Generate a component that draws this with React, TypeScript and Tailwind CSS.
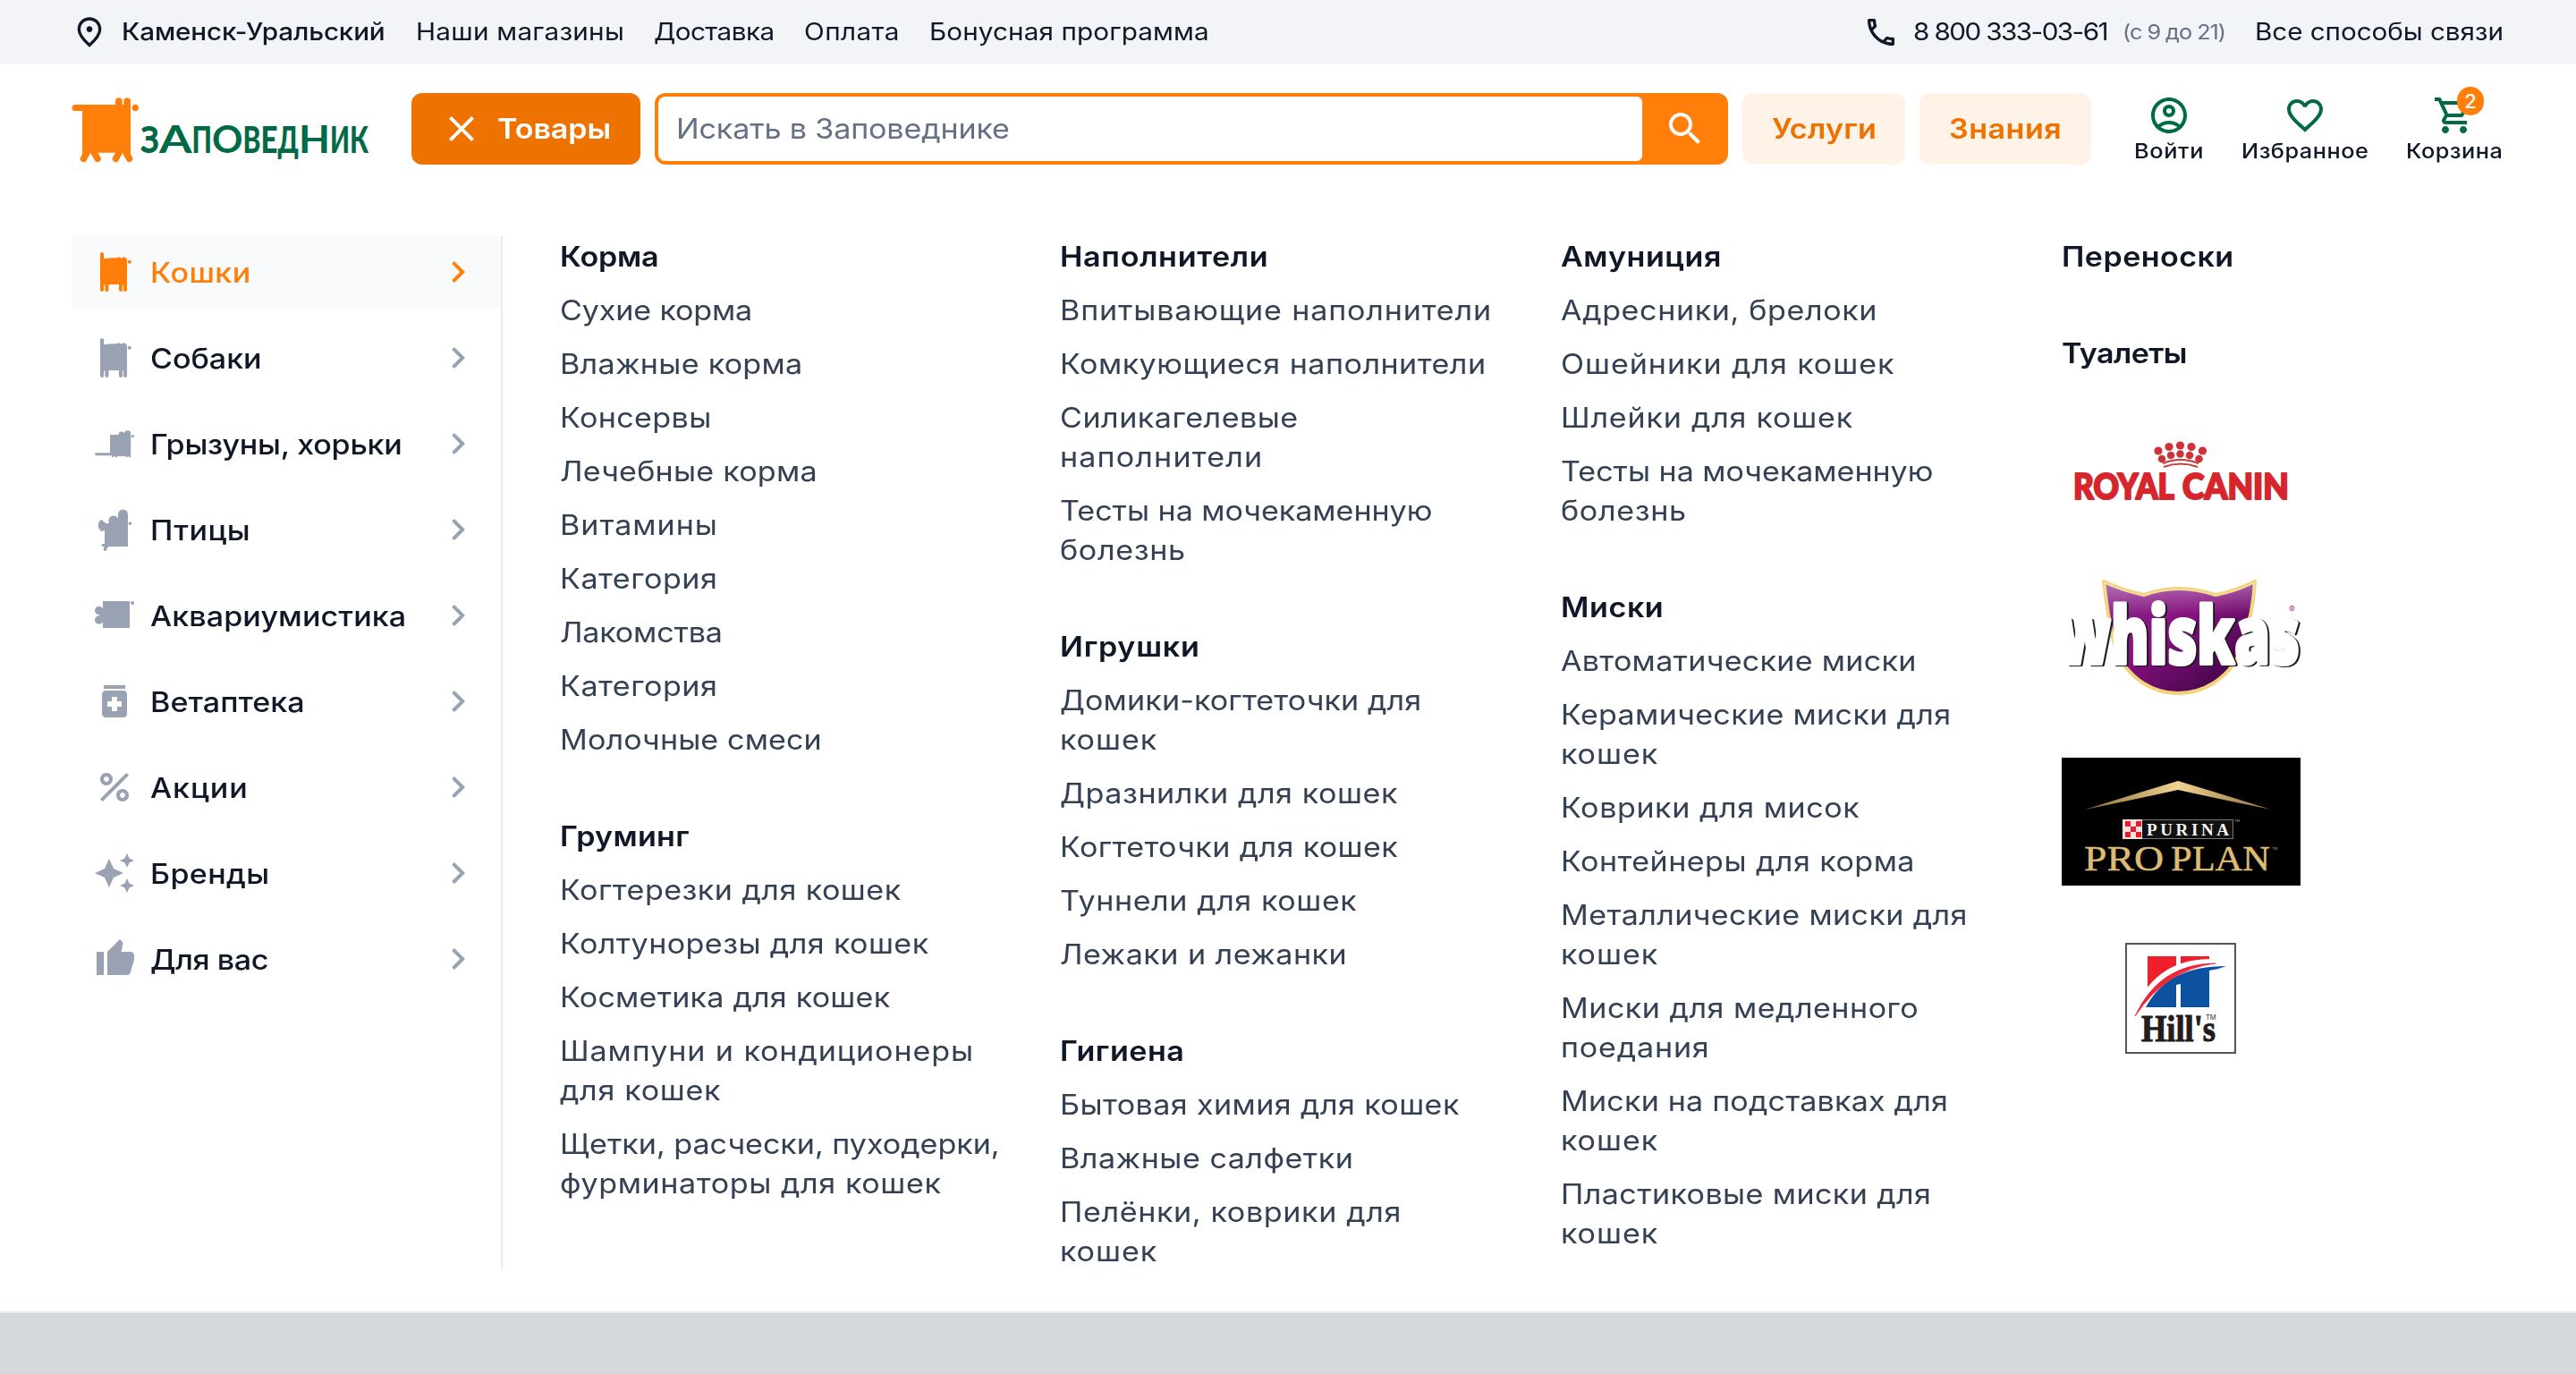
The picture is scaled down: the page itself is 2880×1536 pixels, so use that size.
import React, { useLayoutEffect, useRef } from "react";
import {
  MdAutoAwesome,
  MdChevronRight,
  MdFavoriteBorder,
  MdMedication,
  MdOutlineAccountCircle,
  MdOutlineCall,
  MdOutlineShoppingCart,
  MdPercent,
  MdSearch,
} from "react-icons/md";

const STRETCH = 1.1;

/** A single line of slightly widened text whose tracking is adjusted to fill the given width. */
function Line({ w, children, className = "" }: { w: number; children: string; className?: string }) {
  const ref = useRef<HTMLSpanElement>(null);
  useLayoutEffect(() => {
    const el = ref.current;
    if (!el) return;
    el.style.letterSpacing = "0px";
    const natural = el.offsetWidth;
    el.style.letterSpacing = `${((w + 2) / STRETCH - natural) / children.length}px`;
  }, [w, children]);
  return (
    <span className={`block whitespace-nowrap ${className}`} style={{ width: w + 2 }}>
      <span ref={ref} className="inline-block origin-left scale-x-[1.1] pt-px">
        {children}
      </span>
    </span>
  );
}

type Row = [string, number];
type Item = Row[];
type Section = { title: Row; items: Item[] };

const columns: Section[][] = [
  [
    {
      title: ["Корма", 108],
      items: [
        [["Сухие корма", 213]],
        [["Влажные корма", 270]],
        [["Консервы", 168]],
        [["Лечебные корма", 286]],
        [["Витамины", 175]],
        [["Категория", 174]],
        [["Лакомства", 180]],
        [["Категория", 174]],
        [["Молочные смеси", 291]],
      ],
    },
    {
      title: ["Груминг", 143],
      items: [
        [["Когтерезки для кошек", 380]],
        [["Колтунорезы для кошек", 410]],
        [["Косметика для кошек", 367]],
        [["Шампуни и кондиционеры", 461], ["для кошек", 178]],
        [["Щетки, расчески, пуходерки,", 490], ["фурминаторы для кошек", 424]],
      ],
    },
  ],
  [
    {
      title: ["Наполнители", 231],
      items: [
        [["Впитывающие наполнители", 481]],
        [["Комкующиеся наполнители", 475]],
        [["Силикагелевые", 265], ["наполнители", 225]],
        [["Тесты на мочекаменную", 414], ["болезнь", 139]],
      ],
    },
    {
      title: ["Игрушки", 155],
      items: [
        [["Домики-когтеточки для", 402], ["кошек", 107]],
        [["Дразнилки для кошек", 376]],
        [["Когтеточки для кошек", 376]],
        [["Туннели для кошек", 330]],
        [["Лежаки и лежанки", 319]],
      ],
    },
    {
      title: ["Гигиена", 138],
      items: [
        [["Бытовая химия для кошек", 445]],
        [["Влажные салфетки", 326]],
        [["Пелёнки, коврики для", 380], ["кошек", 107]],
      ],
    },
  ],
  [
    {
      title: ["Амуниция", 178],
      items: [
        [["Адресники, брелоки", 352]],
        [["Ошейники для кошек", 371]],
        [["Шлейки для кошек", 325]],
        [["Тесты на мочекаменную", 414], ["болезнь", 139]],
      ],
    },
    {
      title: ["Миски", 113],
      items: [
        [["Автоматические миски", 396]],
        [["Керамические миски для", 434], ["кошек", 107]],
        [["Коврики для мисок", 332]],
        [["Контейнеры для корма", 394]],
        [["Металлические миски для", 453], ["кошек", 107]],
        [["Миски для медленного", 398], ["поедания", 165]],
        [["Миски на подставках для", 431], ["кошек", 107]],
        [["Пластиковые миски для", 412], ["кошек", 107]],
      ],
    },
  ],
];

const columnWidths = ["w-[559px]", "w-[560px]", "w-[561px]"];

function PinIcon() {
  return (
    <svg className="size-10" viewBox="0 -960 960 960" fill="currentColor">
      <path d="M480-480q33 0 56.500-23.500T560-560q0-33-23.500-56.500T480-640q-33 0-56.500 23.500T400-560q0 33 23.500 56.500T480-480Zm0 294q122-112 181-203.500T720-552q0-109-69.500-178.500T480-800q-101 0-170.500 69.500T240-552q0 71 59 162.500T480-186Zm0 106Q319-217 239.500-334.500T160-552q0-150 96.500-239T480-880q127 0 223.500 89T800-552q0 100-79.500 217.500T480-80Z" />
    </svg>
  );
}

function ThumbIcon() {
  return (
    <svg className="size-12" viewBox="0 -960 960 960" fill="currentColor">
      <path d="M760-120H320v-520l280-280 50 50q7 7 11.500 19t4.500 23v14l-34 174h208q32 0 56 24t24 56v80q0 7-1.500 15t-4.500 15L834-168q-9 20-30 34t-44 14ZM240-640v520H80v-520h160Z" />
    </svg>
  );
}

function CatIcon() {
  return (
    <svg className="size-12" viewBox="0 0 48 48" fill="currentColor">
      <path d="M8 4a2 2 0 0 1 4 0v5.200Q19 8 27 8.200a2 2 0 0 1 3.500 0H33a2 2 0 0 1 3.500 0Q38 9 38 11v33a2 2 0 0 1-4 0v-5.500h-1V44a2 2 0 0 1-4 0v-6H17.500v6a2 2 0 0 1-4.200 0v-5.500H12V44a2 2 0 0 1-4 0Z" />
      <circle cx="40.800" cy="12.700" r="2" />
    </svg>
  );
}

function RodentIcon() {
  return (
    <svg className="size-12" viewBox="0 0 48 48" fill="currentColor">
      <path d="M3.500 34.200H19V14h9.500a3.400 3.400 0 0 1 6.500-1.500A3.600 3.600 0 0 1 42.200 13v25a1.200 1.200 0 0 1-2.400 0h-1a1.200 1.200 0 0 1-2.400 0H27a1.200 1.200 0 0 1-2.400 0h-1.200a1.200 1.200 0 0 1-2.400 0V37.200H3.500a1.500 1.500 0 0 1 0-3Z" />
      <circle cx="44.400" cy="15.600" r="1.700" />
    </svg>
  );
}

function BirdIcon() {
  return (
    <svg className="size-12" viewBox="0 0 48 48" fill="currentColor">
      <path d="M18 16.500a5.500 5.500 0 0 1 10-5V7a5.500 5.500 0 0 1 11 0v36H17l-2 4a1.500 1.500 0 0 1-3-1.500l.6-2.500H11a1.500 1.500 0 0 1 0-3h2V24.500l-2.500 1.300a1.600 1.600 0 0 1-2.200-2.200 1.700 1.700 0 0 1-1.900-2.600 1.700 1.700 0 0 1 .2-3 1.800 1.800 0 0 1 .8-3 1.700 1.700 0 0 1 3.200-1l4.400 3.500Z" />
      <circle cx="41.400" cy="17.200" r="1.800" />
    </svg>
  );
}

function FishIcon() {
  return (
    <svg className="size-12" viewBox="0 0 48 48" fill="currentColor">
      <path d="M11 8h30v30H11v-6L7 24l4-8Z" />
      <circle cx="6.700" cy="18.500" r="4.700" />
      <circle cx="6.700" cy="29" r="4.700" />
      <circle cx="44" cy="10" r="2" />
    </svg>
  );
}

const sidebar: { label: string; w: number; icon: React.ReactNode; active?: boolean }[] = [
  { label: "Кошки", w: 111, icon: <CatIcon />, active: true },
  { label: "Собаки", w: 122, icon: <CatIcon /> },
  { label: "Грызуны, хорьки", w: 279, icon: <RodentIcon /> },
  { label: "Птицы", w: 110, icon: <BirdIcon /> },
  { label: "Аквариумистика", w: 284, icon: <FishIcon /> },
  { label: "Ветаптека", w: 171, icon: <MdMedication className="size-12" /> },
  { label: "Акции", w: 108, icon: <MdPercent className="size-12" /> },
  { label: "Бренды", w: 132, icon: <MdAutoAwesome className="size-12" /> },
  { label: "Для вас", w: 130, icon: <ThumbIcon /> },
];

function Logo() {
  return (
    <svg className="h-20 w-[336px] shrink-0 overflow-visible" viewBox="80 104 336 80">
      <g fill="#ff7f0a">
        <path d="M84 117h45v-5a4 4 0 0 1 7.600 0v5h1.800v-5a4 4 0 0 1 7.600 0v60l2 4a3.700 3.700 0 0 1-6.500 3.500L137 171l-4.500 8.500a3.700 3.700 0 0 1-6.500-3.500l3-5.300h-19.500l3 5.300a3.700 3.700 0 0 1-6.500 3.500L101.200 171l-4.700 8.500a3.700 3.700 0 0 1-6.500-3.500l2-4v-48H84a3.500 3.500 0 0 1 0-7Z" />
        <circle cx="151.300" cy="120.500" r="3.700" />
      </g>
      <g fill="#006a47" fontFamily="Lato, sans-serif" fontWeight="900" fontSize="42.500">
        <text x="157" y="170.500" textLength="21" lengthAdjust="spacingAndGlyphs">З</text>
        <text x="178" y="170.500" textLength="36.500" lengthAdjust="spacingAndGlyphs" fontWeight="700">А</text>
        <text x="214.500" y="170.500" textLength="22.500" lengthAdjust="spacingAndGlyphs">П</text>
        <text x="237" y="170.500" textLength="34.500" lengthAdjust="spacingAndGlyphs" fontWeight="700">О</text>
        <text x="271.500" y="170.500" textLength="20" lengthAdjust="spacingAndGlyphs">В</text>
        <text x="291.500" y="170.500" textLength="19" lengthAdjust="spacingAndGlyphs">Е</text>
        <text x="310.500" y="170.500" textLength="23.500" lengthAdjust="spacingAndGlyphs">Д</text>
        <text x="334" y="170.500" textLength="35" lengthAdjust="spacingAndGlyphs" fontWeight="700">Н</text>
        <text x="369" y="170.500" textLength="22" lengthAdjust="spacingAndGlyphs">И</text>
        <text x="391" y="170.500" textLength="21" lengthAdjust="spacingAndGlyphs">К</text>
      </g>
    </svg>
  );
}

function RoyalCanin() {
  return (
    <svg className="h-[80px] w-[267px]" viewBox="0 0 267 80">
      <g fill="#cf3339">
        <circle cx="108" cy="15" r="4.600" />
        <circle cx="120" cy="10.500" r="4.600" />
        <circle cx="132.500" cy="9" r="4.600" />
        <circle cx="145" cy="10.500" r="4.600" />
        <circle cx="157.500" cy="15" r="4.600" />
        <circle cx="112" cy="24" r="4.300" />
        <circle cx="122" cy="20" r="4.300" />
        <circle cx="132.500" cy="18.500" r="4.300" />
        <circle cx="143" cy="20" r="4.300" />
        <circle cx="153.500" cy="24" r="4.300" />
      </g>
      <path d="M113 29q20-8 40 0M114 33q19-7 38 0" stroke="#c93a3c" strokeWidth="2" fill="none" />
      <g fill="#dd2229" stroke="#d02a31" strokeWidth="2.200" strokeLinejoin="round" fontFamily="Lato, sans-serif" fontWeight="900" fontSize="39">
        <text x="13" y="69" textLength="113" lengthAdjust="spacingAndGlyphs">ROYAL</text>
        <text x="135" y="69" textLength="119" lengthAdjust="spacingAndGlyphs">CANIN</text>
      </g>
    </svg>
  );
}

function Whiskas() {
  return (
    <svg className="h-[134px] w-[267px] overflow-visible" viewBox="0 0 267 134">
      <defs>
        <linearGradient id="purple" x1="0" y1="0" x2="1" y2="1">
          <stop offset="0" stopColor="#8d2b8e" />
          <stop offset="0.450" stopColor="#85107e" />
          <stop offset="1" stopColor="#2c0336" />
        </linearGradient>
        <linearGradient id="shine" x1="0" y1="0" x2="0" y2="1">
          <stop offset="0" stopColor="#fff" stopOpacity="0.350" />
          <stop offset="0.300" stopColor="#fff" stopOpacity="0" />
        </linearGradient>
      </defs>
      <path
        d="M47 5Q68 15 92 20Q130 6 172 20Q194 16 216 5Q214 40 203 72C195 108 162 130 130 130S67 108 58 72Q51 40 47 5Z"
        fill="url(#purple)" stroke="#f4d27c" strokeWidth="4" strokeLinejoin="round"
      />
      <path
        d="M47 5Q68 15 92 20Q130 6 172 20Q194 16 216 5Q214 40 203 72C195 108 162 130 130 130S67 108 58 72Q51 40 47 5Z"
        fill="url(#shine)"
      />
      <text
        className="[filter:drop-shadow(2px_1.5px_0.5px_#1c1c1f)]"
        x="-3" y="97" fill="#fff" stroke="#fff" strokeWidth="4" strokeLinejoin="round"
        fontFamily="'Open Sans', sans-serif" fontWeight="800" fontSize="88"
        textLength="269" lengthAdjust="spacingAndGlyphs"
      >
        whiskas
      </text>
      <text x="254" y="40" fontSize="10" fill="#a0408f" fontFamily="Inter, sans-serif">®</text>
    </svg>
  );
}

function ProPlan() {
  return (
    <svg className="h-[143px] w-[267px] bg-black" viewBox="0 0 267 143">
      <defs>
        <linearGradient id="gold" x1="0" y1="0" x2="1" y2="0">
          <stop offset="0" stopColor="#8a6b35" />
          <stop offset="0.500" stopColor="#f2d391" />
          <stop offset="1" stopColor="#8a6b35" />
        </linearGradient>
      </defs>
      <path d="M26 58Q80 41 130 26Q180 41 234 58Q180 47 130 36Q80 47 26 58Z" fill="url(#gold)" />
      <rect x="68.500" y="69.500" width="123" height="21" fill="#111" stroke="#777" />
      <rect x="68" y="69" width="22" height="22" fill="#f6dfe0" />
      <path d="M71 71h6v6h-6zM83 71h6v6h-6zM77 77h6v6h-6zM71 83h6v6h-6zM83 83h6v6h-6z" fill="#e01f2d" />
      <text x="95" y="86.500" fill="#f5f5f5" fontFamily="'Liberation Serif', serif" fontWeight="700" fontSize="19" textLength="92">PURINA</text>
      <g fill="#dcbb74" stroke="#dcbb74" strokeWidth="0.500" fontFamily="'Liberation Serif', serif" fontSize="40">
        <text x="25" y="125.500" textLength="89" lengthAdjust="spacingAndGlyphs">PRO</text>
        <text x="122" y="125.500" textLength="111" lengthAdjust="spacingAndGlyphs">PLAN</text>
      </g>
      <text x="235" y="103" fill="#aaa" fontFamily="Inter, sans-serif" fontSize="4">TM</text>
      <text x="193" y="72" fill="#aaa" fontFamily="Inter, sans-serif" fontSize="4">TM</text>
    </svg>
  );
}

function Hills() {
  return (
    <svg className="mr-px size-[124px]" viewBox="0 0 124 124">
      <rect x="1" y="1" width="122" height="122" fill="#fff" stroke="#555" strokeWidth="2" />
      <path d="M25 15H57V30Q37 42 25 58Z" fill="#f01f2b" />
      <path d="M62 15H94V21Q78 21 62 28Z" fill="#f01f2b" />
      <path d="M23 72Q36 48 58 37Q80 26 113 26Q103 30 94 31V72H62V46L57 47V72Z" fill="#0d52a0" />
      <path d="M11 82Q36 18 101 22" fill="none" stroke="#fff" strokeWidth="7" />
      <path d="M11 82Q38 23 101 23Q46 29 11 82Z" fill="#ee2636" stroke="#ee2636" strokeWidth="0.800" />
      <text x="18" y="110" fill="#231c1c" stroke="#231c1c" strokeWidth="1" fontFamily="'Liberation Serif', serif" fontWeight="700" fontSize="43" textLength="83" lengthAdjust="spacingAndGlyphs">Hill's</text>
      <text x="90" y="86" fill="#333" fontFamily="Inter, sans-serif" fontSize="7.500">TM</text>
    </svg>
  );
}

export default function App() {
  return (
    <div className="flex h-[1536px] w-[2880px] flex-col overflow-hidden bg-[#d5d9de] font-['Inter','Noto_Sans',sans-serif] text-[#101828]">
      <div className="border-b-2 border-[#eaecf0] bg-white">
        <div className="flex h-[72px] items-center justify-between bg-[#f2f4f7] pr-[81px] pl-20 text-[27px]">
          <div className="flex items-center">
            <PinIcon />
            <Line w={293} className="ml-4 font-[450]">Каменск-Уральский</Line>
            <nav className="ml-[34px] flex gap-[33px]">
              <Line w={231}>Наши магазины</Line>
              <Line w={133}>Доставка</Line>
              <Line w={105}>Оплата</Line>
              <Line w={311}>Бонусная программа</Line>
            </nav>
          </div>
          <div className="flex items-center">
            <MdOutlineCall className="size-10" />
            <Line w={215} className="ml-4">8 800 333-03-61</Line>
            <Line w={113} className="ml-[17px] text-[23px] text-[#667085]">(с 9 до 21)</Line>
            <Line w={276} className="ml-[33px]">Все способы связи</Line>
          </div>
        </div>

        <header className="flex h-36 items-center pl-20">
          <Logo />
          <button className="ml-11 flex h-20 w-64 items-center rounded-xl bg-[#ee7200] pl-8 text-left text-[31px] font-semibold text-white">
            <svg className="size-12" viewBox="0 0 24 24" stroke="currentColor" strokeWidth="2" fill="none">
              <path d="m5.700 5.700 12.600 12.600m0-12.600L5.700 18.300" />
            </svg>
            <Line w={125} className="ml-4">Товары</Line>
          </button>
          <div className="ml-4 flex h-20 w-[1200px] rounded-xl bg-[#ff7f0a] p-1 pr-0">
            <div className="flex h-full w-[1100px] items-center rounded-l-lg rounded-r-md bg-white pl-5 text-[31px] text-[#667085]">
              <Line w={371}>Искать в Заповеднике</Line>
            </div>
            <div className="flex flex-1 items-center justify-center text-white">
              <MdSearch className="size-12" />
            </div>
          </div>
          <button className="ml-4 flex h-20 w-[182px] items-center justify-center rounded-xl bg-[#fff2e6] text-left text-[31px] font-semibold text-[#ee7200]">
            <Line w={115}>Услуги</Line>
          </button>
          <button className="ml-4 flex h-20 w-48 items-center justify-center rounded-xl bg-[#fff2e6] text-left text-[31px] font-semibold text-[#ee7200]">
            <Line w={124}>Знания</Line>
          </button>
          <div className="ml-12 flex gap-[42px] text-[23px] leading-[30px] font-[450]">
            <div className="flex flex-col items-center">
              <MdOutlineAccountCircle className="size-12 text-[#006a47]" />
              <Line w={76}>Войти</Line>
            </div>
            <div className="flex flex-col items-center">
              <MdFavoriteBorder className="size-12 text-[#006a47]" />
              <Line w={140}>Избранное</Line>
            </div>
            <div className="relative flex flex-col items-center">
              <MdOutlineShoppingCart className="size-12 text-[#006a47]" />
              <div className="absolute -top-2 right-[21px] flex h-8 w-[30px] items-center justify-center rounded-full bg-[#ff7f0a] text-[22px] text-white">
                2
              </div>
              <Line w={106}>Корзина</Line>
            </div>
          </div>
        </header>

        <main className="flex h-[1250px] pt-12 pl-20 text-[31px] leading-[44px]">
          <aside className="flex h-[1156px] w-[482px] shrink-0 flex-col gap-4 border-r-2 border-[#eaecf0]">
            {sidebar.map((s) => (
              <a
                key={s.label}
                className={`flex h-20 items-center pr-6 pl-6 font-[450] ${s.active ? "bg-[#f9fafb] text-[#ff7f0a]" : "text-[#101828]"}`}
              >
                <span className={s.active ? "text-[#ff7f0a]" : "text-[#98a2b3]"}>{s.icon}</span>
                <Line w={s.w} className="ml-4">{s.label}</Line>
                <MdChevronRight className={`ml-auto size-12 ${s.active ? "text-[#ff7f0a]" : "text-[#98a2b3]"}`} />
              </a>
            ))}
          </aside>
          <div className="flex pl-[63px]">
            {columns.map((col, i) => (
              <div key={i} className={`flex flex-col gap-16 pl-px ${columnWidths[i]}`}>
                {col.map((sec) => (
                  <section key={sec.title[0]} className="flex flex-col gap-4">
                    <h3 className="flex h-11 font-semibold">
                      <Line w={sec.title[1]}>{sec.title[0]}</Line>
                    </h3>
                    {sec.items.map((item, j) => (
                      <a key={j} className="flex flex-col text-[#344054]">
                        {item.map(([text, w]) => (
                          <Line key={text} w={w} className="h-11">{text}</Line>
                        ))}
                      </a>
                    ))}
                  </section>
                ))}
              </div>
            ))}
            <div className="flex w-[267px] flex-col items-start">
              <h3 className="mb-16 flex h-11 font-semibold">
                <Line w={191}>Переноски</Line>
              </h3>
              <h3 className="flex h-11 font-semibold">
                <Line w={138}>Туалеты</Line>
              </h3>
              <div className="mt-[73px] flex flex-col items-center">
                <RoyalCanin />
                <div className="mt-[76px]"><Whiskas /></div>
                <div className="mt-[68px]"><ProPlan /></div>
                <div className="mt-16"><Hills /></div>
              </div>
            </div>
          </div>
        </main>
      </div>
    </div>
  );
}
